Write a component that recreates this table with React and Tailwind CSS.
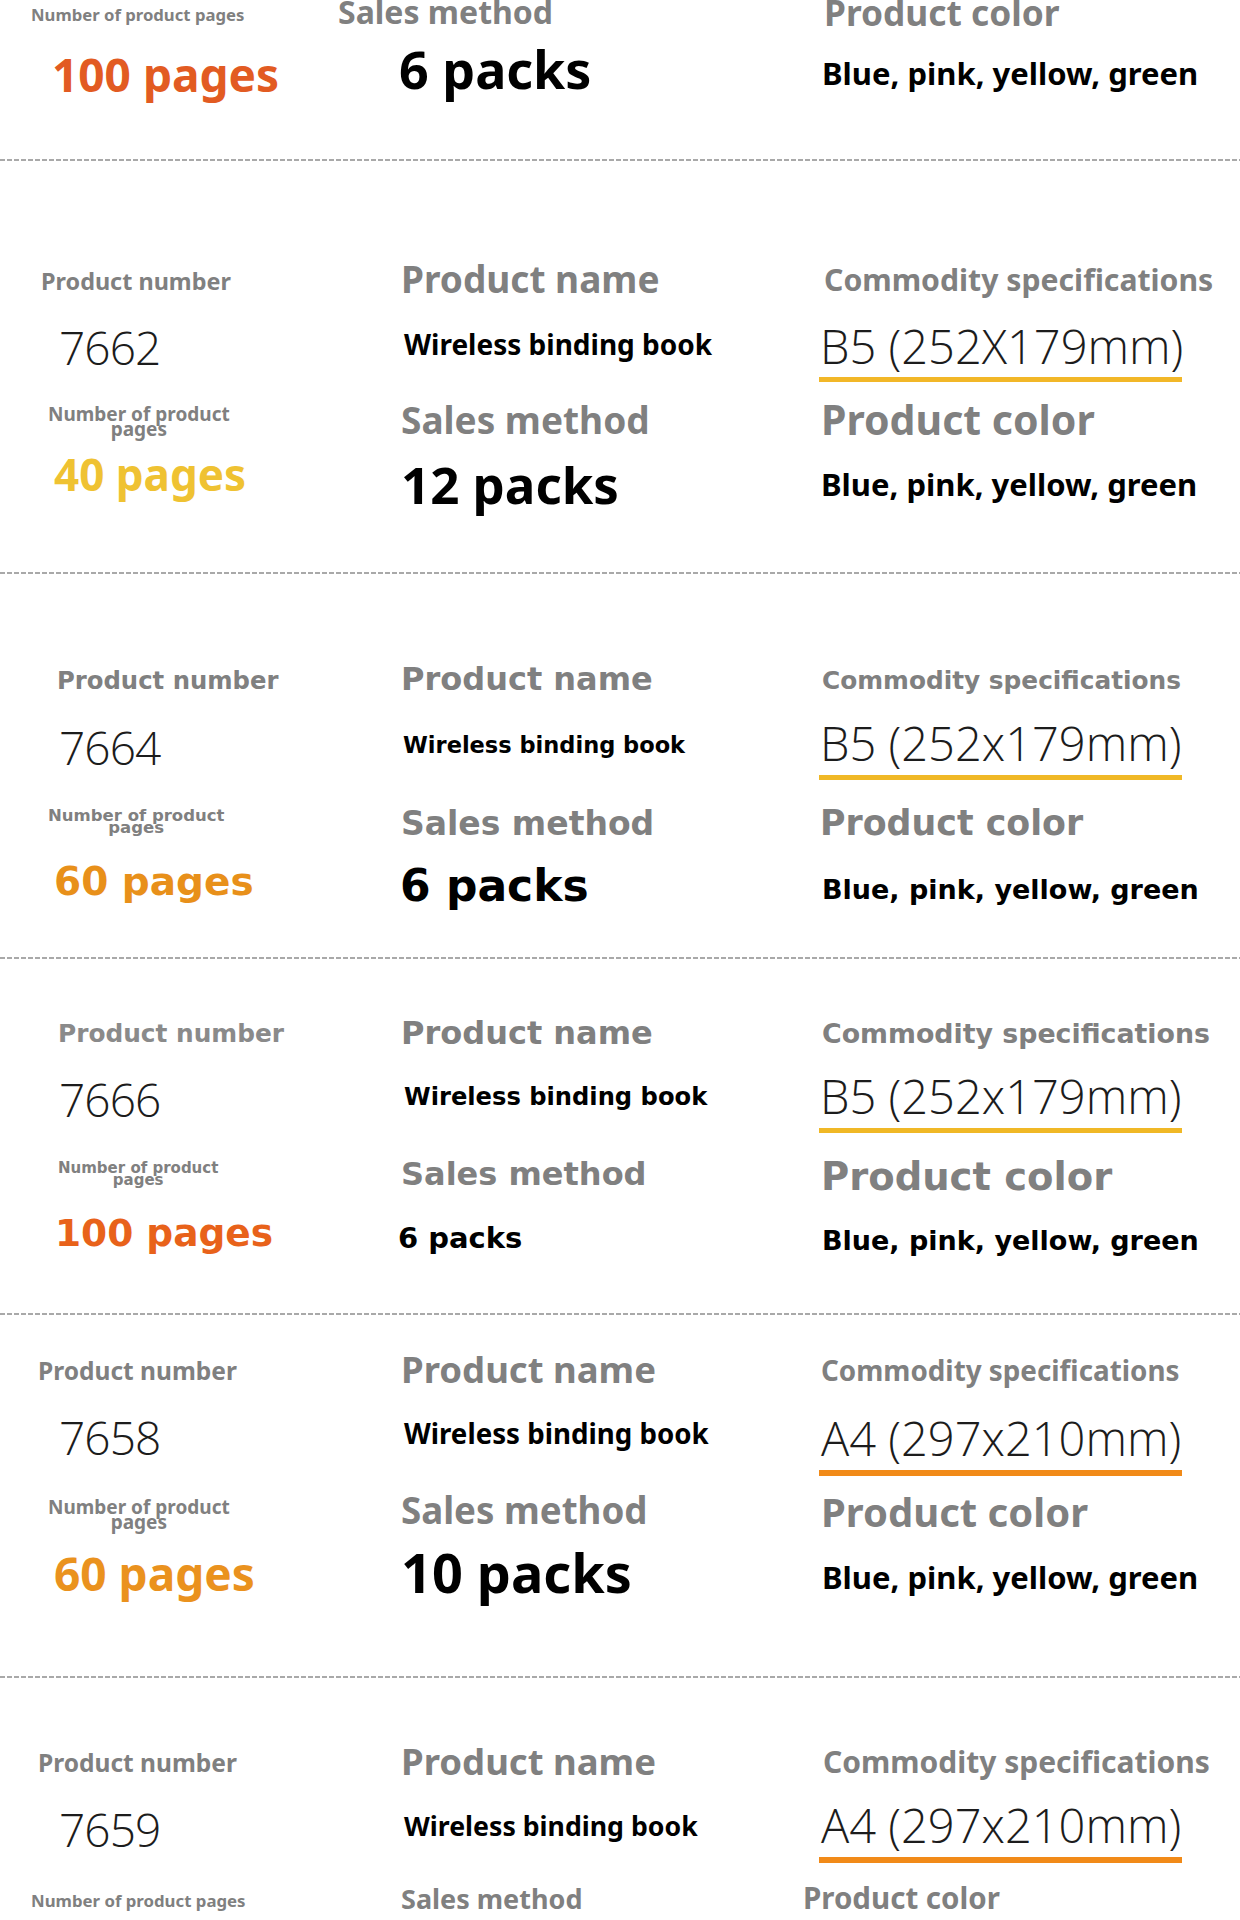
import React from 'react';

const Divider = () => (
  <div className="h-[2px] w-full bg-[repeating-linear-gradient(90deg,#a9a9a9_0_5px,transparent_5px_7px)]" />
);

export default function App() {
  return (
    <div className="w-[1240px] h-[1920px] overflow-hidden bg-white">
      {/* row 0, cut at the top */}
      <div className="h-[159px] grid grid-cols-[338px_481px_1fr]">
        <div>
          <div className="font-['Noto_Sans',sans-serif] font-bold text-[16.7px] leading-none text-[#808080] mt-[7px] pl-[31px]">Number of product pages</div>
          <div className="font-['Noto_Sans',sans-serif] font-bold text-[46px] leading-none text-[#e25b22] mt-[27px] pl-[52px]">100 pages</div>
        </div>
        <div>
          <div className="font-['Noto_Sans',sans-serif] font-bold text-[32px] leading-none text-[#808080] -mt-[4px]">Sales method</div>
          <div className="font-['Noto_Sans',sans-serif] font-bold text-[52px] leading-none text-black mt-[15px] pl-[61px]">6 packs</div>
        </div>
        <div>
          <div className="font-['Noto_Sans',sans-serif] font-bold text-[35.3px] leading-none text-[#808080] -mt-[5px] pl-[5px]">Product color</div>
          <div className="font-['Noto_Sans',sans-serif] font-bold text-[31px] leading-none text-black mt-[28px] pl-[3px]">Blue, pink, yellow, green</div>
        </div>
      </div>
      <Divider />

      {/* 7662 */}
      <div className="h-[411px] grid grid-cols-[400px_419px_1fr]">
        <div>
          <div className="font-['Noto_Sans',sans-serif] font-bold text-[23.4px] leading-none text-[#808080] mt-[109px] pl-[41px]">Product number</div>
          <div className="font-['Open_Sans',sans-serif] font-light text-[46px] leading-none tracking-[-0.02em] text-[#1c1c1c] mt-[31px] pl-[59px]">7662</div>
          <div className="font-['Noto_Sans',sans-serif] font-bold text-[19px] leading-[15px] text-[#808080] text-center whitespace-nowrap w-fit mt-[37px] ml-[48px]">Number of product<br />pages</div>
          <div className="font-['Noto_Sans',sans-serif] font-bold text-[44px] leading-none text-[#efc232] mt-[15px] pl-[54px]">40 pages</div>
        </div>
        <div>
          <div className="font-['Noto_Sans',sans-serif] font-bold text-[37px] leading-none text-[#808080] mt-[99px] pl-[1px]">Product name</div>
          <div className="font-['Noto_Sans',sans-serif] font-bold text-[28px] leading-none text-black mt-[33px] pl-[4px]">Wireless binding book</div>
          <div className="font-['Noto_Sans',sans-serif] font-bold text-[37px] leading-none text-[#808080] mt-[43px] pl-[1px]">Sales method</div>
          <div className="font-['Noto_Sans',sans-serif] font-bold text-[51px] leading-none text-black mt-[21px] pl-[1px]">12 packs</div>
        </div>
        <div>
          <div className="font-['Noto_Sans',sans-serif] font-bold text-[30.2px] leading-none text-[#808080] mt-[104px] pl-[5px]">Commodity specifications</div>
          <div className="font-['Open_Sans',sans-serif] font-light text-[47px] leading-none text-[#1c1c1c] mt-[28px] pl-[1px]">B5 (252X179mm)</div>
          <div className="h-[5px] w-[363px] mt-[7px] bg-[#f2b728]" />
          <div className="font-['Noto_Sans',sans-serif] font-bold text-[41px] leading-none text-[#808080] mt-[17px] pl-[2px]">Product color</div>
          <div className="font-['Noto_Sans',sans-serif] font-bold text-[31px] leading-none text-black mt-[29px] pl-[2px]">Blue, pink, yellow, green</div>
        </div>
      </div>
      <Divider />

      {/* 7664 */}
      <div className="h-[383px] grid grid-cols-[400px_419px_1fr]">
        <div>
          <div className="font-['DejaVu_Sans',sans-serif] font-bold text-[24.3px] leading-none text-[#808080] mt-[95px] pl-[57px]">Product number</div>
          <div className="font-['Open_Sans',sans-serif] font-light text-[46px] leading-none tracking-[-0.02em] text-[#1c1c1c] mt-[31px] pl-[59px]">7664</div>
          <div className="font-['DejaVu_Sans',sans-serif] font-bold text-[16.5px] leading-[12px] text-[#808080] text-center whitespace-nowrap w-fit mt-[40px] ml-[48px]">Number of product<br />pages</div>
          <div className="font-['DejaVu_Sans',sans-serif] font-bold text-[39px] leading-none text-[#e8901a] mt-[28px] pl-[54px]">60 pages</div>
        </div>
        <div>
          <div className="font-['DejaVu_Sans',sans-serif] font-bold text-[32px] leading-none text-[#808080] mt-[89px] pl-[1px]">Product name</div>
          <div className="font-['DejaVu_Sans',sans-serif] font-bold text-[22.5px] leading-none text-black mt-[39px] pl-[3px]">Wireless binding book</div>
          <div className="font-['DejaVu_Sans',sans-serif] font-bold text-[33px] leading-none text-[#808080] mt-[50px] pl-[1px]">Sales method</div>
          <div className="font-['DejaVu_Sans',sans-serif] font-bold text-[44px] leading-none text-black mt-[24px]">6 packs</div>
        </div>
        <div>
          <div className="font-['DejaVu_Sans',sans-serif] font-bold text-[24.8px] leading-none text-[#808080] mt-[95px] pl-[3px]">Commodity specifications</div>
          <div className="font-['Open_Sans',sans-serif] font-light text-[47px] leading-none text-[#1c1c1c] mt-[26px] pl-[1px]">B5 (252x179mm)</div>
          <div className="h-[5px] w-[363px] mt-[8px] bg-[#f0b826]" />
          <div className="font-['DejaVu_Sans',sans-serif] font-bold text-[34.8px] leading-none text-[#808080] mt-[26px] pl-[1px]">Product color</div>
          <div className="font-['DejaVu_Sans',sans-serif] font-bold text-[27px] leading-none text-black mt-[35px] pl-[3px]">Blue, pink, yellow, green</div>
        </div>
      </div>
      <Divider />

      {/* 7666 */}
      <div className="h-[354px] grid grid-cols-[400px_419px_1fr]">
        <div>
          <div className="font-['DejaVu_Sans',sans-serif] font-bold text-[24.8px] leading-none text-[#8a8a8a] mt-[63px] pl-[58px]">Product number</div>
          <div className="font-['Open_Sans',sans-serif] font-light text-[46px] leading-none tracking-[-0.02em] text-[#1c1c1c] mt-[29px] pl-[59px]">7666</div>
          <div className="font-['DejaVu_Sans',sans-serif] font-bold text-[15px] leading-[12.5px] text-[#808080] text-center whitespace-nowrap w-fit mt-[40px] ml-[58px]">Number of product<br />pages</div>
          <div className="font-['DejaVu_Sans',sans-serif] font-bold text-[37.5px] leading-none text-[#e8621a] mt-[28px] pl-[55px]">100 pages</div>
        </div>
        <div>
          <div className="font-['DejaVu_Sans',sans-serif] font-bold text-[32px] leading-none text-[#808080] mt-[58px] pl-[1px]">Product name</div>
          <div className="font-['DejaVu_Sans',sans-serif] font-bold text-[24.2px] leading-none text-black mt-[36px] pl-[4px]">Wireless binding book</div>
          <div className="font-['DejaVu_Sans',sans-serif] font-bold text-[32px] leading-none text-[#808080] mt-[49px] pl-[1px]">Sales method</div>
          <div className="font-['DejaVu_Sans',sans-serif] font-bold text-[29px] leading-none text-black mt-[34px] -ml-[2px]">6 packs</div>
        </div>
        <div>
          <div className="font-['DejaVu_Sans',sans-serif] font-bold text-[26.8px] leading-none text-[#808080] mt-[62px] pl-[3px]">Commodity specifications</div>
          <div className="font-['Open_Sans',sans-serif] font-light text-[47px] leading-none text-[#1c1c1c] mt-[25px] pl-[1px]">B5 (252x179mm)</div>
          <div className="h-[5px] w-[363px] mt-[8px] bg-[#f0b826]" />
          <div className="font-['DejaVu_Sans',sans-serif] font-bold text-[38.5px] leading-none text-[#808080] mt-[25px] pl-[2px]">Product color</div>
          <div className="font-['DejaVu_Sans',sans-serif] font-bold text-[27px] leading-none text-black mt-[31px] pl-[3px]">Blue, pink, yellow, green</div>
        </div>
      </div>
      <Divider />

      {/* 7658 */}
      <div className="h-[361px] grid grid-cols-[400px_419px_1fr]">
        <div>
          <div className="font-['Noto_Sans',sans-serif] font-bold text-[24.5px] leading-none text-[#808080] mt-[44px] pl-[38px]">Product number</div>
          <div className="font-['Open_Sans',sans-serif] font-light text-[46px] leading-none tracking-[-0.02em] text-[#1c1c1c] mt-[30px] pl-[59px]">7658</div>
          <div className="font-['Noto_Sans',sans-serif] font-bold text-[19px] leading-[15px] text-[#808080] text-center whitespace-nowrap w-fit mt-[40px] ml-[48px]">Number of product<br />pages</div>
          <div className="font-['Noto_Sans',sans-serif] font-bold text-[46px] leading-none text-[#ea921e] mt-[20px] pl-[54px]">60 pages</div>
        </div>
        <div>
          <div className="font-['Noto_Sans',sans-serif] font-bold text-[36.5px] leading-none text-[#808080] mt-[36px] pl-[1px]">Product name</div>
          <div className="font-['Noto_Sans',sans-serif] font-bold text-[27.7px] leading-none text-black mt-[32px] pl-[4px]">Wireless binding book</div>
          <div className="font-['Noto_Sans',sans-serif] font-bold text-[36.7px] leading-none text-[#808080] mt-[45px] pl-[1px]">Sales method</div>
          <div className="font-['Noto_Sans',sans-serif] font-bold text-[54px] leading-none text-black mt-[16px] pl-[1px]">10 packs</div>
        </div>
        <div>
          <div className="font-['Noto_Sans',sans-serif] font-bold text-[27.8px] leading-none text-[#808080] mt-[42px] pl-[2px]">Commodity specifications</div>
          <div className="font-['Open_Sans',sans-serif] font-light text-[47px] leading-none text-[#1c1c1c] mt-[30px] pl-[2px]">A4 (297x210mm)</div>
          <div className="h-[6px] w-[363px] mt-[8px] bg-[#f18a18]" />
          <div className="font-['Noto_Sans',sans-serif] font-bold text-[40px] leading-none text-[#808080] mt-[16px] pl-[2px]">Product color</div>
          <div className="font-['Noto_Sans',sans-serif] font-bold text-[31px] leading-none text-black mt-[30px] pl-[3px]">Blue, pink, yellow, green</div>
        </div>
      </div>
      <Divider />

      {/* 7659, cut at the bottom */}
      <div className="grid grid-cols-[400px_419px_1fr]">
        <div>
          <div className="font-['Noto_Sans',sans-serif] font-bold text-[24.5px] leading-none text-[#808080] mt-[73px] pl-[38px]">Product number</div>
          <div className="font-['Open_Sans',sans-serif] font-light text-[46px] leading-none tracking-[-0.02em] text-[#1c1c1c] mt-[30px] pl-[59px]">7659</div>
          <div className="font-['Noto_Sans',sans-serif] font-bold text-[16.8px] leading-none text-[#808080] mt-[41px] pl-[31px]">Number of product pages</div>
        </div>
        <div>
          <div className="font-['Noto_Sans',sans-serif] font-bold text-[36.5px] leading-none text-[#808080] mt-[65px] pl-[1px]">Product name</div>
          <div className="font-['Noto_Sans',sans-serif] font-bold text-[26.7px] leading-none text-black mt-[33px] pl-[4px]">Wireless binding book</div>
          <div className="font-['Noto_Sans',sans-serif] font-bold text-[27px] leading-none text-[#808080] mt-[46px] pl-[1px]">Sales method</div>
        </div>
        <div>
          <div className="font-['Noto_Sans',sans-serif] font-bold text-[30px] leading-none text-[#808080] mt-[69px] pl-[4px]">Commodity specifications</div>
          <div className="font-['Open_Sans',sans-serif] font-light text-[47px] leading-none text-[#1c1c1c] mt-[25px] pl-[2px]">A4 (297x210mm)</div>
          <div className="h-[6px] w-[363px] mt-[8px] bg-[#f18a18]" />
          <div className="font-['Noto_Sans',sans-serif] font-bold text-[29.5px] leading-none text-[#808080] mt-[20px] -ml-[16px]">Product color</div>
        </div>
      </div>
    </div>
  );
}
